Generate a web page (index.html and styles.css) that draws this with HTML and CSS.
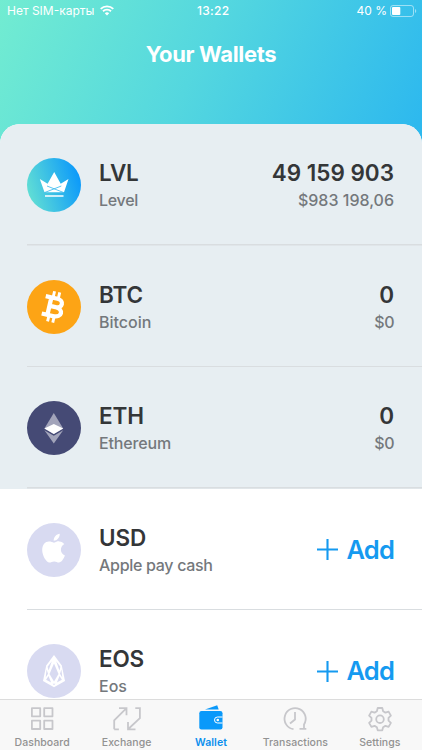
FILE: index.html
```html
<!DOCTYPE html>
<html lang="en">
<head>
<meta charset="utf-8">
<title>Your Wallets</title>
<link rel="stylesheet" href="styles.css">
</head>
<body>
<div class="app">
  <header class="status">
    <span class="carrier">Нет SIM-карты</span>
    <svg class="wifi" width="14" height="11" viewBox="0 0 14 11" fill="none" stroke="#fff" stroke-width="1.9"><path d="M.7 3.9a9 9 0 0 1 12.6 0M3 6.3a5.7 5.7 0 0 1 8 0"/><path d="M7 10.5 4.8 8.3a3.2 3.2 0 0 1 4.4 0z" fill="#fff" stroke="none"/></svg>
    <span class="time">13:22</span>
    <span class="percent">40 %</span>
    <svg class="battery" width="27" height="12" viewBox="0 0 27 12"><rect x=".5" y=".5" width="23" height="11" rx="2.5" fill="none" stroke="#fff" stroke-opacity=".5"/><rect x="2" y="2" width="8.3" height="8" rx="1" fill="#fff"/><path d="M25 4c1.7.7 1.7 3.3 0 4z" fill="#fff" fill-opacity=".5"/></svg>
  </header>
  <h1 class="title">Your Wallets</h1>
  <main class="list">
    <section class="row active">
      <svg class="coin" viewBox="0 0 54 54"><defs><linearGradient id="lvl" x1="0" y1=".65" x2="1" y2=".35"><stop offset="0" stop-color="#62dfd4"/><stop offset="1" stop-color="#0a98fb"/></linearGradient></defs><circle cx="27" cy="27" r="27" fill="url(#lvl)"/><path d="M17.5 34.3 12.8 21l7.8 4.8L27.2 14l6.5 11.8 7.8-4.8L37 34.3z" fill="#fff"/><path d="m20 28 16.8 6.6M34.3 28l-16.8 6.6" stroke="#31b8ed" stroke-width=".8"/><path d="M18 38h18.5" stroke="#fff" stroke-width="1.3"/></svg>
      <div class="info"><div class="code">LVL</div><div class="name level">Level</div></div>
      <div class="amount"><div class="code total">49 159 903</div><div class="name">$983 198,06</div></div>
    </section>
    <section class="row active">
      <svg class="coin" viewBox="0 0 54 54"><circle cx="27" cy="27" r="27" fill="#fda415"/><g transform="rotate(13 27 27)" fill="none" stroke="#fff"><path d="M16.5 18.2h12c7.3 0 7.3 8.6 0 8.6H22M28 26.8c9.5 0 9.5 9.3 0 9.3H16.5M22.3 18v18" stroke-width="4.3"/><path d="M24 11.5v6M29.3 11.5v6M24 36.5v6M29.3 36.5v6" stroke-width="2.9"/></g></svg>
      <div class="info"><div class="code">BTC</div><div class="name">Bitcoin</div></div>
      <div class="amount"><div class="code">0</div><div class="name zero">$0</div></div>
    </section>
    <section class="row active">
      <svg class="coin" viewBox="0 0 54 54"><circle cx="27" cy="27" r="27" fill="#454a75"/><path d="m26.8 12 9.4 15.5-9.4 5.5-9.4-5.5z" fill="#a2a4ba"/><path d="m26.8 23 9.4 4.5-9.4 5.5-9.4-5.5z" fill="#fff"/><path d="m17.4 29.3 9.4 5.5 9.4-5.5-9.4 13.2z" fill="#a2a4ba"/></svg>
      <div class="info"><div class="code">ETH</div><div class="name ethereum">Ethereum</div></div>
      <div class="amount"><div class="code">0</div><div class="name zero">$0</div></div>
    </section>
    <section class="row">
      <svg class="coin" viewBox="0 0 54 54"><circle cx="27" cy="27" r="27" fill="#d8daf1"/><path d="M27 19.8c2-.9 3.4-1.6 5.3-1.4 2.2.2 3.9 1.1 5 2.7-5 3.2-4.2 9.3.6 11.5-1.2 3.2-3.4 7-6 7-1.8 0-2.4-1.1-4.7-1.1s-2.9 1.1-4.7 1.1c-3.5 0-7.3-7.5-7.3-12.5 0-5.1 3-8.5 6.8-8.5 2 0 3.4.6 5 1.2zM26.7 17.8c-.2-3.7 2.9-6.7 6-7 .4 3.6-2.7 7-6 7z" fill="#fff"/></svg>
      <div class="info"><div class="code">USD</div><div class="name apple">Apple pay cash</div></div>
      <button class="add"><svg width="21" height="21" viewBox="0 0 21 21"><path d="M10.5 0v21M0 10.5h21" stroke="#159af0" stroke-width="2.1"/></svg><span>Add</span></button>
    </section>
    <section class="row">
      <svg class="coin" viewBox="0 0 54 54"><circle cx="27" cy="27" r="27" fill="#d8daf1"/><path d="m27 11 7.8 10.5L38 37l-11 6.3L16 37l3.200-15.500z" fill="#fff"/><g fill="#d8daf1"><path d="m27 19.500 4.500 10.500-4.500 7.500-4.500-7.500z"/><path d="m24.800 17.300-4.200 5.400 1 3.800zM29.200 17.300l4.200 5.400-1 3.800zM19.600 25.500l1.400 4.300-2.300 3.800zM34.400 25.500 33 29.800l2.300 3.800zM21.500 32l2.600 6.500-5-2.800zM32.500 32l-2.600 6.500 5-2.800zM25.500 39.700h3L27 41z"/></g></svg>
      <div class="info"><div class="code">EOS</div><div class="name">Eos</div></div>
      <button class="add"><svg width="21" height="21" viewBox="0 0 21 21"><path d="M10.5 0v21M0 10.5h21" stroke="#159af0" stroke-width="2.1"/></svg><span>Add</span></button>
    </section>
  </main>
  <nav class="tabs">
    <a class="tab"><svg width="28" height="28" viewBox="0 0 28 28"><path d="M3.9 3.2h8.3v8.1H3.900zM16.200 3.200h8.300v8.100h-8.300zM3.900 15.700h8.300v8.300H3.900zM16.200 15.700h8.300v8.300h-8.300z" stroke-linejoin="round"/></svg><span>Dashboard</span></a>
    <a class="tab"><svg width="28" height="28" viewBox="0 0 28 28"><path d="M1.200 24.300v-9L13 3.700M6 3.200h7.500v7M1.200 24.300h4.700M22.300 3.200h4.600v10L15.300 24M15 17v7.300h7.500"/></svg><span>Exchange</span></a>
    <a class="tab selected"><svg width="28" height="28" viewBox="0 0 28 28"><path d="M8 4.400 20.200.300l1.500 4.100z" stroke="none" fill="#0a99fa"/><rect x="2.300" y="6" width="23.200" height="18.500" rx="2.200" stroke="none" fill="#0a99fa"/><path d="M25.500 12h-5a3 3 0 0 0 0 6h5" stroke="#fff" stroke-width="1"/><circle cx="20.800" cy="15" r="1.300" stroke="none" fill="#fff"/></svg><span>Wallet</span></a>
    <a class="tab"><svg width="28" height="28" viewBox="0 0 28 28"><path d="M12.500 24.200A10.600 10.600 0 1 1 23 19.500v4.300M18.500 23.900h6.800M14 7v7.500l-5 4"/></svg><span>Transactions</span></a>
    <a class="tab"><svg width="28" height="28" viewBox="0 0 28 28"><path d="M11.700 3h4.600l.8 3.300 2.300 1.300 3.200-1 2.300 4-2.400 2.300v2.700l2.400 2.300-2.300 4-3.200-1-2.300 1.300-.8 3.100h-4.600l-.8-3.100-2.300-1.300-3.200 1-2.300-4 2.400-2.300v-2.700l-2.400-2.300 2.300-4 3.200 1 2.300-1.300z" stroke-linejoin="round"/><circle cx="14" cy="14.200" r="3.800"/></svg><span>Settings</span></a>
  </nav>
</div>
</body>
</html>
```
FILE: styles.css
```css
* { box-sizing: border-box; }
body { margin: 0; font-family: Inter, "Liberation Sans", sans-serif; }
.app {
  height: 750px;
  overflow: hidden;
  display: flex;
  flex-direction: column;
  background: linear-gradient(115deg, #72ecd1 0, #54d7df 205px, #2eb9ee 430px);
}
.status {
  height: 22px;
  flex: none;
  display: flex;
  align-items: center;
  padding: 0 5px 0 7px;
  color: #fff;
  font-size: 12px;
  line-height: 22px;
  white-space: nowrap;
}
.carrier { width: 93px; }
.wifi { margin-top: -2px; }
.time { width: 34px; margin-left: 83px; font-weight: 500; letter-spacing: .3px; }
.percent { margin-left: auto; margin-right: 3px; }
.battery { margin-top: -1px; }
.title {
  height: 102px;
  flex: none;
  margin: 0;
  padding-top: 18px;
  color: #fff;
  font-size: 22px;
  line-height: 28px;
  font-weight: 650;
  letter-spacing: -.35px;
  text-align: center;
}
.list {
  flex: 1;
  min-height: 0;
  overflow: hidden;
  border-radius: 20px 20px 0 0;
  background: #fff;
}
.row {
  height: 121.5px;
  display: flex;
  align-items: flex-start;
  padding: 34px 28px 0 27px;
  background: linear-gradient(#d9dde0, #d9dde0) 27px 100% / 100% 1.5px no-repeat;
}
.active { background-color: #e7eef2; }
.coin { width: 54px; height: 54px; flex: none; }
.info { margin-left: 18px; }
.amount { margin-left: auto; text-align: right; }
.code {
  height: 28px;
  color: #343638;
  font-size: 22.5px;
  line-height: 30px;
  font-weight: 630;
  letter-spacing: -.15px;
}
.total { letter-spacing: 0; }
.name {
  color: #74787c;
  font-size: 16px;
  line-height: 29px;
  font-weight: 500;
}
.level { letter-spacing: -.3px; }
.ethereum { letter-spacing: -.15px; }
.apple { letter-spacing: -.3px; }
.zero { letter-spacing: -.5px; }
.add {
  display: flex;
  align-items: center;
  gap: 8px;
  height: 54px;
  margin-left: auto;
  padding: 0;
  border: 0;
  background: none;
  color: #159af0;
  font: 630 25.500px/54px Inter, "Liberation Sans", sans-serif;
  letter-spacing: -.8px;
}
.tabs {
  height: 51px;
  flex: none;
  display: grid;
  grid-template-columns: repeat(5, 1fr);
  border-top: 1px solid #dcdcdc;
  background: #f8f8f8;
}
.tab {
  display: flex;
  flex-direction: column;
  align-items: center;
  padding-top: 5px;
  color: #929292;
  font-size: 10.5px;
  line-height: 20px;
  font-weight: 500;
  letter-spacing: .05px;
}
.tab svg { flex: none; fill: none; stroke: #c7c7cb; stroke-width: 1.8; }
.selected { color: #0a8fee; font-weight: 600; }
```
